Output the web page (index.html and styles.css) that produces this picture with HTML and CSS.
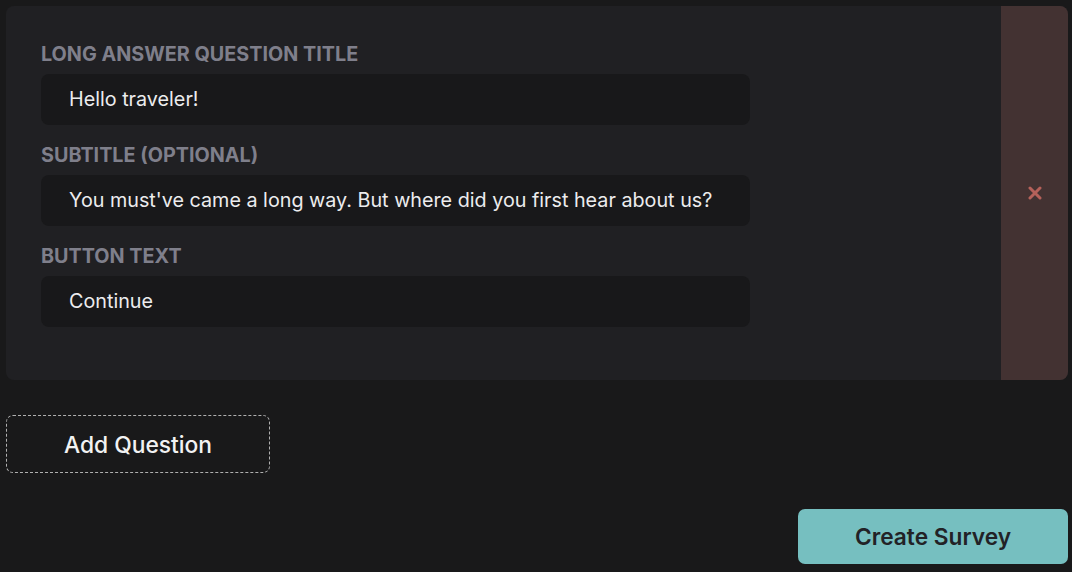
FILE: index.html
```html
<!DOCTYPE html>
<html>
<head>
<meta charset="utf-8">
<link rel="stylesheet" href="styles.css">
</head>
<body>
<div class="page">
  <div class="card">
    <div class="fields">
      <div class="field">
        <div class="label">LONG ANSWER QUESTION TITLE</div>
        <div class="input">Hello traveler!</div>
      </div>
      <div class="field">
        <div class="label">SUBTITLE (OPTIONAL)</div>
        <div class="input">You must've came a long way. But where did you first hear about us?</div>
      </div>
      <div class="field">
        <div class="label">BUTTON TEXT</div>
        <div class="input">Continue</div>
      </div>
    </div>
    <div class="remove">
      <svg width="14" height="14" viewBox="0 0 14 14"><path d="M2 2 L12 12 M12 2 L2 12" stroke="#b5615a" stroke-width="3" stroke-linecap="round"/></svg>
    </div>
  </div>
  <div class="add-row">
    <div class="add-btn">Add Question</div>
  </div>
  <div class="submit-row">
    <div class="create-btn">Create Survey</div>
  </div>
</div>
</body>
</html>
```
FILE: styles.css
```css
html, body {
  margin: 0;
  padding: 0;
  background: #19191a;
  font-family: Inter, "Noto Sans", sans-serif;
}
.page {
  padding: 6px 4px 0 6px;
  display: flex;
  flex-direction: column;
}
.card {
  display: flex;
  background: #202023;
  border-radius: 8px;
  height: 374px;
  overflow: hidden;
}
.fields {
  flex: 1;
  padding: 37px 0 0 35px;
  display: flex;
  flex-direction: column;
  gap: 19px;
}
.field {
  display: flex;
  flex-direction: column;
  gap: 9px;
}
.label {
  color: #7f7f8b;
  font-weight: 700;
  font-size: 19.8px;
  line-height: 22px;
}
.input {
  width: 709px;
  height: 51px;
  box-sizing: border-box;
  background: #18181a;
  border-radius: 8px;
  color: #ececee;
  font-size: 19.75px;
  line-height: 51px;
  padding-left: 28px;
}
.remove {
  width: 67px;
  background: #433232;
  display: flex;
  align-items: center;
  justify-content: center;
}
.add-row {
  margin-top: 35px;
  display: flex;
}
.add-btn {
  width: 264px;
  height: 58px;
  box-sizing: border-box;
  border: 1px dashed #b0b0b0;
  border-radius: 7px;
  display: flex;
  align-items: center;
  justify-content: center;
  color: #f2f2f2;
  font-size: 22.8px;
  font-weight: 500;
}
.submit-row {
  margin-top: 36px;
  display: flex;
  justify-content: flex-end;
}
.create-btn {
  width: 270px;
  height: 55px;
  background: #76bfc0;
  border-radius: 7px;
  display: flex;
  align-items: center;
  justify-content: center;
  color: #222226;
  font-size: 22.7px;
  font-weight: 600;
}
```
